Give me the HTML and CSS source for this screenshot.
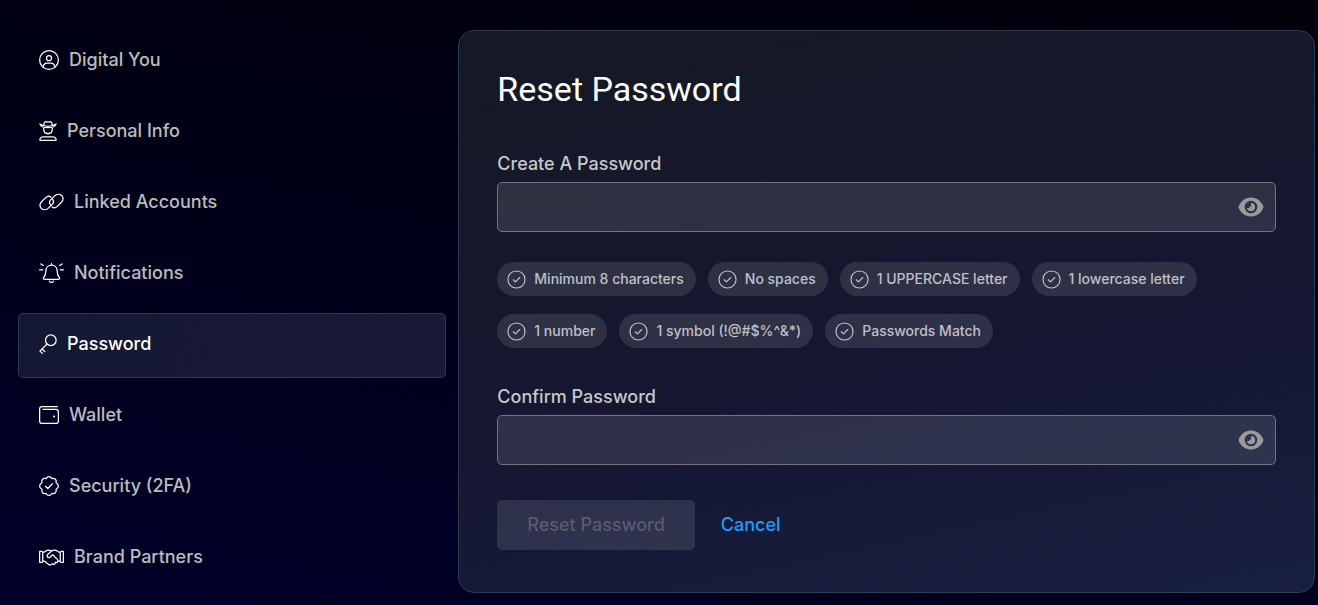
FILE: index.html
```html
<!DOCTYPE html>
<html lang="en">
<head>
<meta charset="utf-8">
<title>Reset Password</title>
<link rel="stylesheet" href="styles.css">
</head>
<body>
<svg class="sprite" aria-hidden="true">
  <symbol id="check" viewBox="0 0 20 20"><circle cx="10" cy="10" r="9"/><path d="M6.6 10.3l2.3 2.2 4.5-4.6"/></symbol>
  <symbol id="eye" viewBox="0 0 26 20"><path fill-rule="evenodd" d="M13 .5C7 .5 2.600 4.500.700 9.300a1.800 1.800 0 0 0 0 1.400C2.600 15.500 7 19.500 13 19.500s10.400-4 12.300-8.800a1.800 1.800 0 0 0 0-1.400C23.400 4.500 19 .5 13 .5zM13 3.700a6.300 6.300 0 1 1 0 12.600 6.300 6.300 0 0 1 0-12.600z"/><path d="M13 5.900a4.100 4.100 0 1 1-4 5c2.400.400 4.700-1.300 4-5z"/></symbol>
</svg>
<div class="layout">
  <nav class="menu" aria-label="Settings">
    <a class="item" href="#"><svg class="icon" viewBox="0 0 512 512"><circle cx="256" cy="256" r="240"/><circle cx="256" cy="208" r="64"/><path d="M104 440c8-68 46-104 104-104h96c58 0 96 36 104 104"/></svg>Digital You</a>
    <a class="item" href="#"><svg class="icon narrow" viewBox="0 0 448 512"><path d="M16 80c20 56 100 92 208 92s188-36 208-92c-30 14-70 30-106 36M16 80c30 14 70 30 106 36M112 120c4-56 22-104 62-104 18 0 32 12 50 12s32-12 50-12c40 0 58 48 62 104M122 116c66 24 138 24 204 0M112 176c0 80 36 150 112 150s112-70 112-150M184 304l40 30 40-30M32 496h384c22 0 20-22 10-44-14-30-40-44-74-44H96c-34 0-60 14-74 44-10 22-12 44 10 44z"/></svg>Personal Info</a>
    <a class="item" href="#"><svg class="icon wide" viewBox="0 0 640 512"><path d="M296 330c-36-44-32-98 6-136l98-94c50-50 130-54 180-10s46 124-4 174L468 368c-40 38-94 42-134 14"/><path d="M344 182c36 44 32 98-6 136l-98 94c-50 50-130 54-180 10s-46-124 4-174l108-104c40-38 94-42 134-14"/></svg>Linked Accounts</a>
    <a class="item" href="#"><svg class="icon wide" viewBox="0 0 640 512"><path d="M320 16v40M320 56c-88 0-144 64-144 150 0 92-24 130-60 174-12 18-2 36 18 36h372c20 0 30-18 18-36-36-44-60-82-60-174 0-86-56-150-144-150zM272 464c14 44 82 44 96 0M16 176h80M544 176h80M48 24l64 38M592 24l-64 38"/></svg>Notifications</a>
    <a class="item active" href="#" aria-current="page"><svg class="icon narrow" viewBox="0 0 448 512"><circle cx="296" cy="160" r="136"/><path d="M200 256L18 438l62 58M72 384l68 64"/></svg>Password</a>
    <a class="item" href="#"><svg class="icon" viewBox="0 0 512 512"><path d="M472 40H80c-36 0-64 28-64 64v304c0 36 28 64 64 64h352c36 0 64-28 64-64V176c0-36-28-64-64-64H104"/><circle class="dot" cx="384" cy="292" r="26"/></svg>Wallet</a>
    <a class="item" href="#"><svg class="icon" viewBox="0 0 512 512"><path d="M256 16c34 0 58 20 74 50 34-12 66-8 90 16s28 56 16 90c34 16 60 46 60 84s-26 68-60 84c12 34 8 66-16 90s-56 28-90 16c-16 30-40 50-74 50s-58-20-74-50c-34 12-66 8-90-16s-28-56-16-90c-34-16-60-46-60-84s26-68 60-84c-12-34-8-66 16-90s56-28 90-16c16-30 40-50 74-50zM168 262l58 58 118-120"/></svg>Security (2FA)</a>
    <a class="item" href="#"><svg class="icon wide" viewBox="0 0 640 512"><path d="M16 112h56c16 0 24 8 24 24v232c0 16-8 24-24 24H16zM624 112h-56c-16 0-24 8-24 24v232c0 16 8 24 24 24h56zM96 140c64 0 76-60 146-60 34 0 54 10 78 26 24-16 44-26 78-26 70 0 82 60 146 60M320 106l-98 84c-44 46 18 110 66 66l64-56 118 116c46 44-4 104-50 70 8 50-50 76-84 42-24 40-62 40-88 18L144 362H96M544 362h-66"/></svg>Brand Partners</a>
  </nav>
  <main class="card">
    <h1 class="title">Reset Password</h1>
    <form>
      <label class="label" for="new">Create A Password</label>
      <div class="field"><input class="input" id="new" type="password"><button class="reveal" type="button" aria-label="Show password"><svg class="eye"><use href="#eye"/></svg></button></div>
      <ul class="rules">
        <li class="rule"><svg class="tick"><use href="#check"/></svg>Minimum 8 characters</li>
        <li class="rule"><svg class="tick"><use href="#check"/></svg>No spaces</li>
        <li class="rule"><svg class="tick"><use href="#check"/></svg>1 UPPERCASE letter</li>
        <li class="rule"><svg class="tick"><use href="#check"/></svg>1 lowercase letter</li>
        <li class="rule"><svg class="tick"><use href="#check"/></svg>1 number</li>
        <li class="rule"><svg class="tick"><use href="#check"/></svg>1 symbol (!@#$%^&amp;*)</li>
        <li class="rule"><svg class="tick"><use href="#check"/></svg>Passwords Match</li>
      </ul>
      <label class="label" for="confirm">Confirm Password</label>
      <div class="field"><input class="input" id="confirm" type="password"><button class="reveal" type="button" aria-label="Show password"><svg class="eye"><use href="#eye"/></svg></button></div>
      <div class="actions"><button class="submit" type="submit" disabled>Reset Password</button><a class="cancel" href="#">Cancel</a></div>
    </form>
  </main>
</div>
</body>
</html>
```
FILE: styles.css
```css
* { box-sizing: border-box; }
body {
  margin: 0;
  min-height: 100vh;
  color: #bcbcbc;
  font: 500 18px/24px Inter, "Liberation Sans", sans-serif;
  background: linear-gradient(12deg, #00002a 0%, #00001e 35%, #000014 65%, #00010b 100%);
}
.sprite { position: absolute; width: 0; height: 0; }
.layout {
  display: grid;
  grid-template-columns: 1fr 2fr;
  align-items: start;
  gap: 12px;
  padding: 29px 3px 11px 18px;
}
.menu { display: flex; flex-direction: column; gap: 6px; }
.item {
  display: flex;
  align-items: center;
  gap: 10px;
  min-height: 65px;
  padding: 0 20px 3px;
  border: 1px solid transparent;
  border-radius: 5px;
  color: inherit;
  text-decoration: none;
}
.active {
  color: #fff;
  border-color: #303a50;
  background: linear-gradient(100deg, #141832, #1a1a38);
}
.icon {
  width: 20px;
  height: 20px;
  fill: none;
  stroke: #fff;
  stroke-width: 32;
  stroke-linecap: round;
  stroke-linejoin: round;
}
.narrow { width: 18px; }
.wide { width: 25px; }
.dot { fill: #fff; stroke: none; }
.card {
  margin-top: 1px;
  padding: 38px 38px 42px;
  border: 1px solid #303a50;
  border-radius: 16px;
  background: linear-gradient(168deg, #141924 0%, #15182c 35%, #151733 62%, #182040 100%);
}
.title { margin: 0 0 43px; color: #fff; font: 400 34px/40px Roboto, sans-serif; }
.label { display: block; margin-bottom: 6px; color: #c8c8ca; }
.field { position: relative; }
.input {
  display: block;
  width: 100%;
  height: 50px;
  padding: 0 56px 0 16px;
  border: 1px solid #73747f;
  border-radius: 5px;
  outline: 0;
  color: #fff;
  font: inherit;
  background: rgba(255, 255, 255, .11);
}
.reveal {
  position: absolute;
  top: 0;
  right: 12px;
  bottom: 0;
  display: flex;
  align-items: center;
  padding: 0;
  border: 0;
  background: none;
}
.eye { width: 26px; height: 20px; fill: #9b9b9b; }
.rules {
  display: flex;
  flex-wrap: wrap;
  gap: 18px 12px;
  margin: 30px 0 37px;
  padding: 0;
  list-style: none;
}
.rule {
  display: flex;
  align-items: center;
  gap: 8px;
  height: 34px;
  padding: 0 12px 0 10px;
  border-radius: 17px;
  color: #bfc0c6;
  font-size: 14px;
  background: rgba(255, 255, 255, .11);
}
.tick {
  width: 19px;
  height: 19px;
  fill: none;
  stroke: #c4c5cb;
  stroke-width: 1.2;
  stroke-linecap: round;
  stroke-linejoin: round;
}
.actions { display: flex; align-items: center; gap: 26px; margin-top: 35px; }
.submit {
  height: 50px;
  padding: 0 30px;
  border: 0;
  border-radius: 5px;
  color: #5a5c6e;
  font: inherit;
  background: rgba(255, 255, 255, .11);
}
.cancel { color: #1e9bff; text-decoration: none; }
```
